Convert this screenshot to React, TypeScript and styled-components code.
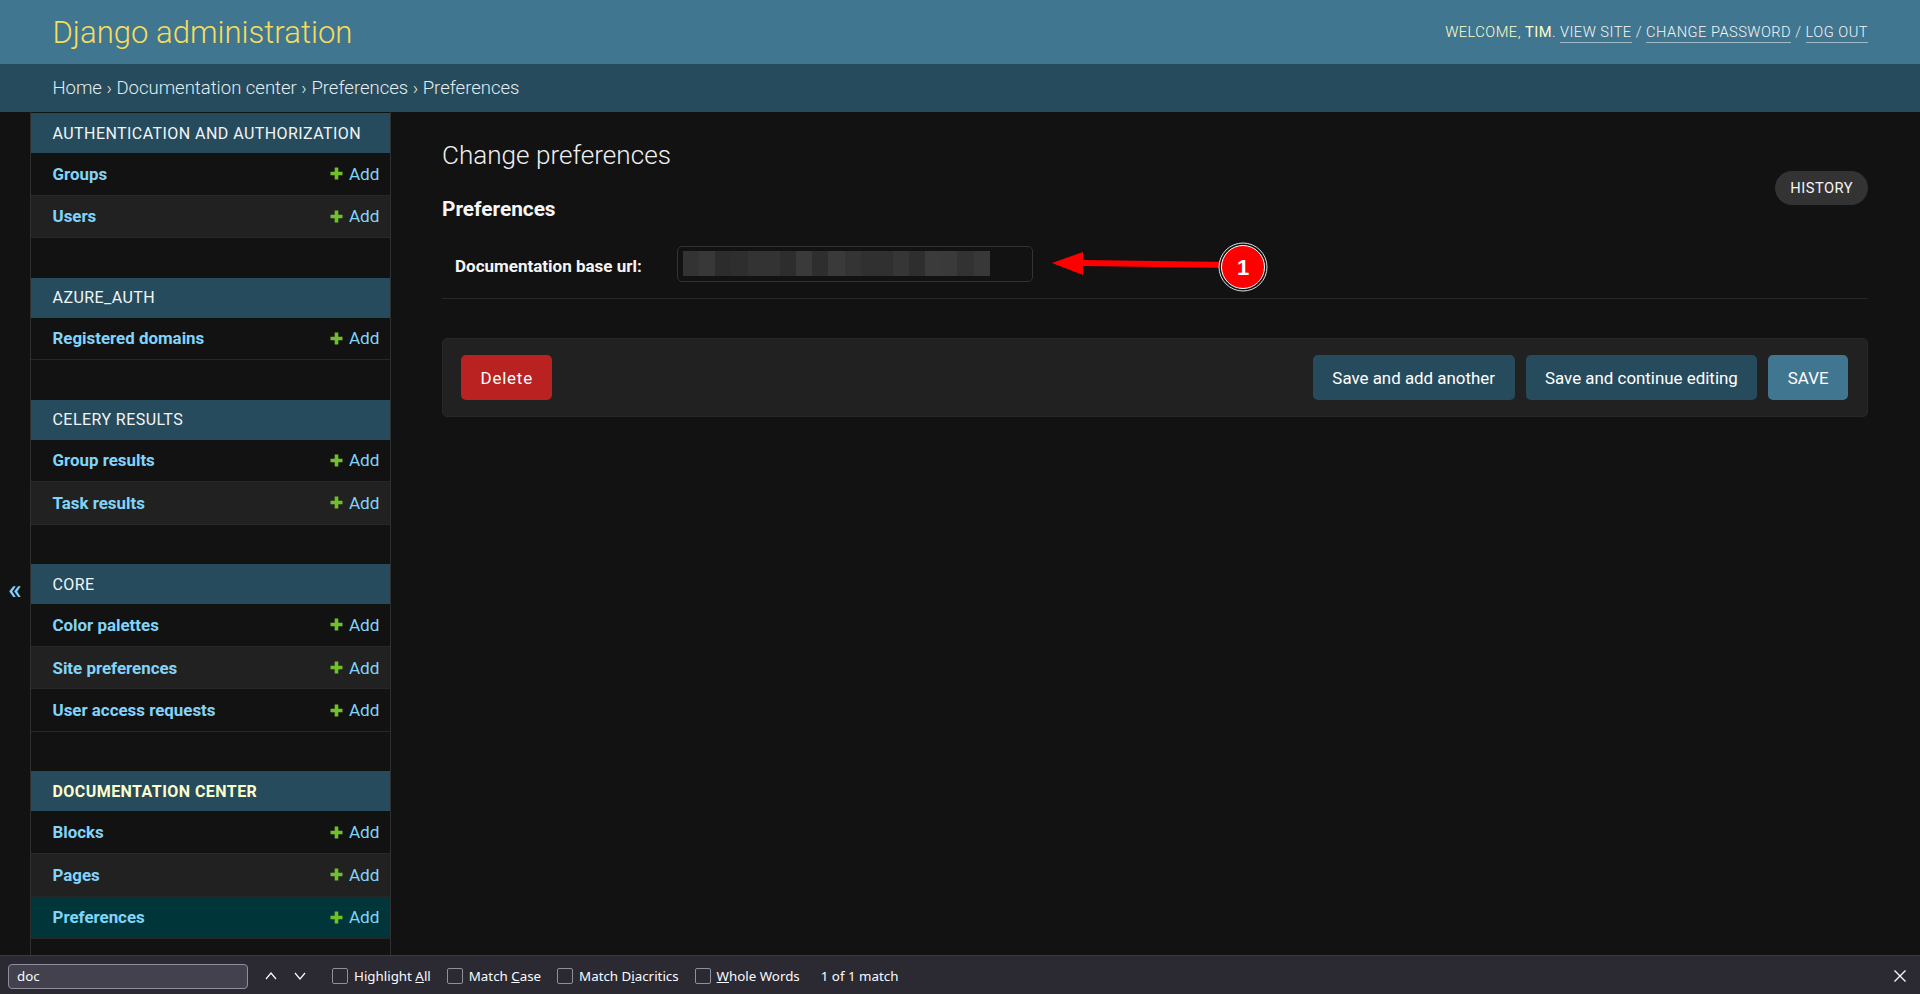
import React from "react";
import styled, { createGlobalStyle } from "styled-components";

const GlobalStyle = createGlobalStyle`
  html, body {
    margin: 0;
    height: 100%;
    background: #121212;
  }
  body {
    font-family: Roboto, "Liberation Sans", sans-serif;
    color: #f7f7f7;
    overflow: hidden;
  }
  * {
    box-sizing: border-box;
  }
`;

const Page = styled.div`
  position: relative;
  display: flex;
  flex-direction: column;
  width: 1920px;
  height: 994px;
  overflow: hidden;
`;

const Header = styled.header`
  display: flex;
  justify-content: space-between;
  align-items: center;
  flex: 0 0 64px;
  padding: 0 52px 0 52.5px;
  background: #417690;
`;

const Branding = styled.h1`
  margin: 0;
  font-size: 31.1px;
  font-weight: 300;
  color: #f5dd5d;
`;

const UserTools = styled.div`
  font-size: 14.67px;
  font-weight: 300;
  letter-spacing: 0.47px;
  text-transform: uppercase;
  color: #ffc;
  margin-top: -1px;

  strong {
    font-weight: 400;
  }
`;

const ToolLink = styled.a`
  color: #f5f5f5;
  border-bottom: 1px solid rgba(255, 255, 255, 0.5);
  padding-bottom: 1px;
`;

const ToolSep = styled.span`
  color: #e8eef2;
`;

const Breadcrumbs = styled.nav`
  display: flex;
  align-items: center;
  flex: 0 0 48px;
  padding: 0 52.5px;
  background: #264b5d;
  color: #e4edf1;
  font-size: 18.5px;
  font-weight: 300;
`;

const Body = styled.div`
  display: flex;
  flex: 1;
  min-height: 0;
`;

const Toggle = styled.button`
  display: flex;
  justify-content: center;
  align-items: flex-start;
  flex: 0 0 31px;
  padding: 463px 0 0;
  border: 0;
  border-right: 1px solid #2f2f2f;
  background: #121212;
  color: #81d4fa;
  font-family: inherit;
  font-size: 28px;
  font-weight: 500;
  line-height: 30px;
`;

const Sidebar = styled.aside`
  flex: 0 0 360px;
  padding-top: 1px;
  border-right: 1px solid #2f2f2f;
  overflow: hidden;
`;

const Module = styled.section`
  margin-bottom: 39.4px;
`;

const Caption = styled.div<{ $current?: boolean }>`
  display: flex;
  align-items: center;
  height: 40px;
  padding-left: 21.5px;
  background: #264b5d;
  color: ${(p) => (p.$current ? "#ffc" : "#f2f5f7")};
  font-size: 16px;
  font-weight: ${(p) => (p.$current ? 700 : 400)};
  letter-spacing: 0.44px;
`;

const Row = styled.div<{ $alt?: boolean; $current?: boolean }>`
  display: flex;
  justify-content: space-between;
  align-items: center;
  height: 42.6px;
  padding: 0 10.5px 0 21.5px;
  border-bottom: 1px solid #272727;
  background: ${(p) => (p.$current ? "#00363a" : p.$alt ? "#212121" : "#121212")};
  font-size: 16.9px;
`;

const RowLink = styled.a`
  color: #81d4fa;
  font-weight: 700;
`;

const AddLink = styled.a`
  display: flex;
  align-items: center;
  gap: 6px;
  color: #81d4fa;
  font-size: 17.2px;
  font-weight: 400;
`;

const Content = styled.main`
  flex: 1;
  padding: 26px 52px 0 51px;
`;

const Title = styled.h1`
  margin: 0;
  height: 33px;
  font-size: 26.1px;
  line-height: 34px;
  font-weight: 300;
  color: #f0f0f0;
`;

const ModelHead = styled.div`
  display: flex;
  justify-content: space-between;
  align-items: flex-start;
  height: 75px;
`;

const ModelName = styled.h2`
  margin: 25px 0 0;
  font-size: 20.8px;
  line-height: 26px;
  font-weight: 700;
  color: #f7f7f7;
`;

const HistoryButton = styled.a`
  display: flex;
  align-items: center;
  height: 34px;
  padding: 0 15px;
  border-radius: 17px;
  background: #333;
  color: #f5f5f5;
  font-size: 14.67px;
  letter-spacing: 0.5px;
`;

const FieldRow = styled.div`
  display: flex;
  align-items: center;
  height: 53px;
  padding: 0 0 17px 13px;
  border-bottom: 1px solid #272727;
`;

const FieldLabel = styled.label`
  flex: 0 0 222px;
  padding-top: 4px;
  font-size: 17px;
  font-weight: 700;
  color: #f5f5f5;
`;

const FieldInput = styled.div`
  display: flex;
  align-items: center;
  width: 356px;
  height: 36px;
  padding: 0 5px;
  border: 1px solid #333;
  border-radius: 5px;
  background: #121212;
`;

const BlurCell = styled.span<{ $shade: string; $w: number }>`
  flex: 0 0 ${(p) => p.$w}px;
  height: 25px;
  background: ${(p) => p.$shade};
`;

const SubmitRow = styled.div`
  display: flex;
  align-items: center;
  gap: 11px;
  height: 79px;
  margin-top: 39px;
  padding: 0 19px 0 18px;
  border: 1px solid #272727;
  border-radius: 5px;
  background: #212121;
`;

const ActionButton = styled.a<{ $tone: "delete" | "secondary" | "primary" }>`
  display: flex;
  align-items: center;
  justify-content: center;
  height: 45px;
  padding: 0 19.5px;
  border-radius: 5px;
  color: #fff;
  font-size: 16.9px;
  letter-spacing: ${(p) => (p.$tone === "delete" ? "0.8px" : "0")};
  background: ${(p) =>
    p.$tone === "delete" ? "#ba2121" : p.$tone === "primary" ? "#417690" : "#264b5d"};
  &:first-child {
    margin-right: auto;
  }
`;

const Annotation = styled.svg`
  position: absolute;
  left: 1040px;
  top: 230px;
  pointer-events: none;
`;

const FindBar = styled.div`
  display: flex;
  align-items: center;
  flex: 0 0 39px;
  padding: 2px 0 0 8px;
  border-top: 1px solid #3a3944;
  background: #2b2a33;
  color: #fbfbfe;
  font-family: "Noto Sans", sans-serif;
  font-size: 13.33px;
`;

const FindInput = styled.div`
  display: flex;
  align-items: center;
  width: 240px;
  height: 25px;
  padding-left: 8px;
  border: 1px solid #8f8f9d;
  border-radius: 4px;
  background: #42414d;
`;

const FindArrows = styled.div`
  display: flex;
  gap: 15px;
  margin: 0 25px 0 16px;
  color: #fbfbfe;
`;

const FindOption = styled.label`
  display: flex;
  align-items: center;
  gap: 6px;
  margin-right: 16px;
`;

const CheckBox = styled.span`
  width: 16px;
  height: 16px;
  border: 1px solid #8f8f9d;
  border-radius: 2px;
`;

const MatchCount = styled.span`
  margin-left: 5px;
`;

const CloseFind = styled.svg`
  margin-left: auto;
  margin-right: 13px;
`;

const PlusIcon = () => (
  <svg width="13" height="13" viewBox="0 0 13 13">
    <path d="M4.7 0.5h3.6v4.2h4.2v3.6H8.3v4.2H4.7V8.3H0.5V4.7h4.2z" fill="#70bf2b" />
  </svg>
);

const modules = [
  { title: "AUTHENTICATION AND AUTHORIZATION", rows: ["Groups", "Users"] },
  { title: "AZURE_AUTH", rows: ["Registered domains"] },
  { title: "CELERY RESULTS", rows: ["Group results", "Task results"] },
  { title: "CORE", rows: ["Color palettes", "Site preferences", "User access requests"] },
  { title: "DOCUMENTATION CENTER", rows: ["Blocks", "Pages", "Preferences"], current: true },
];

const blurCells = [
  ["#333333", 16], ["#383838", 16], ["#2c2c2c", 16], ["#2e2e2e", 17], ["#333333", 32],
  ["#2d2d2d", 16], ["#3a3a3a", 16], ["#2e2e2e", 16], ["#3a3a3a", 17], ["#343434", 16],
  ["#303030", 32], ["#363636", 16], ["#2e2e2e", 16], ["#3b3b3b", 16], ["#3a3a3a", 16],
  ["#323232", 17], ["#383838", 16],
] as [string, number][];

export default function App() {
  return (
    <Page>
      <GlobalStyle />
      <Header>
        <Branding>Django administration</Branding>
        <UserTools>
          Welcome, <strong>Tim</strong>. <ToolLink>View site</ToolLink> <ToolSep>/</ToolSep>{" "}
          <ToolLink>Change password</ToolLink> <ToolSep>/</ToolSep> <ToolLink>Log out</ToolLink>
        </UserTools>
      </Header>
      <Breadcrumbs>Home › Documentation center › Preferences › Preferences</Breadcrumbs>
      <Body>
        <Toggle>«</Toggle>
        <Sidebar>
          {modules.map((mod) => (
            <Module key={mod.title}>
              <Caption $current={mod.current}>{mod.title}</Caption>
              {mod.rows.map((row, i) => (
                <Row key={row} $alt={i % 2 === 1} $current={mod.current && row === "Preferences"}>
                  <RowLink>{row}</RowLink>
                  <AddLink>
                    <PlusIcon />
                    Add
                  </AddLink>
                </Row>
              ))}
            </Module>
          ))}
        </Sidebar>
        <Content>
          <Title>Change preferences</Title>
          <ModelHead>
            <ModelName>Preferences</ModelName>
            <HistoryButton>HISTORY</HistoryButton>
          </ModelHead>
          <FieldRow>
            <FieldLabel>Documentation base url:</FieldLabel>
            <FieldInput>
              {blurCells.map(([shade, w], i) => (
                <BlurCell key={i} $shade={shade} $w={w} />
              ))}
            </FieldInput>
          </FieldRow>
          <SubmitRow>
            <ActionButton $tone="delete">Delete</ActionButton>
            <ActionButton $tone="secondary">Save and add another</ActionButton>
            <ActionButton $tone="secondary">Save and continue editing</ActionButton>
            <ActionButton $tone="primary">SAVE</ActionButton>
          </SubmitRow>
        </Content>
      </Body>
      <FindBar>
        <FindInput>doc</FindInput>
        <FindArrows>
          <svg width="14" height="14" viewBox="0 0 14 14">
            <path d="M2 10l5-6 5 6" fill="none" stroke="#fbfbfe" strokeWidth="1.2" />
          </svg>
          <svg width="14" height="14" viewBox="0 0 14 14">
            <path d="M2 4l5 6 5-6" fill="none" stroke="#fbfbfe" strokeWidth="1.2" />
          </svg>
        </FindArrows>
        <FindOption>
          <CheckBox />
          <span>
            Highlight <u>A</u>ll
          </span>
        </FindOption>
        <FindOption>
          <CheckBox />
          <span>
            Match <u>C</u>ase
          </span>
        </FindOption>
        <FindOption>
          <CheckBox />
          <span>
            Match D<u>i</u>acritics
          </span>
        </FindOption>
        <FindOption>
          <CheckBox />
          <span>
            <u>W</u>hole Words
          </span>
        </FindOption>
        <MatchCount>1 of 1 match</MatchCount>
        <CloseFind width="14" height="14" viewBox="0 0 14 14">
          <path d="M1.5 1.5l11 11M12.5 1.5l-11 11" stroke="#fbfbfe" strokeWidth="1.3" />
        </CloseFind>
      </FindBar>
      <Annotation width="240" height="70" viewBox="0 0 240 70">
        <path d="M12 33L43 22V30L190 32V38L43 36V45z" fill="#ff0000" />
        <circle cx="203" cy="37" r="24" fill="#121212" stroke="#e0e0e0" strokeWidth="1" />
        <circle cx="203" cy="37" r="21.5" fill="#ff0000" stroke="#ffffff" strokeWidth="1" />
        <text
          x="203"
          y="45"
          textAnchor="middle"
          fill="#ffffff"
          fontFamily="Liberation Sans, sans-serif"
          fontWeight="700"
          fontSize="22"
        >
          1
        </text>
      </Annotation>
    </Page>
  );
}
